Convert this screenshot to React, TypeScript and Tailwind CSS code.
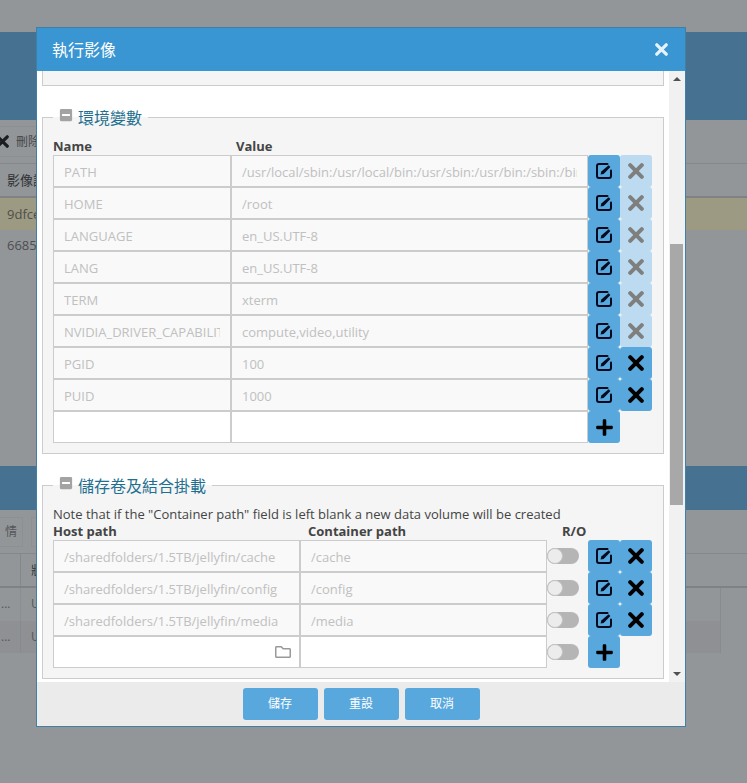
import React from "react";
import { FaPlus, FaMinusSquare, FaRegFolder } from "react-icons/fa";

const FONT = "[font-family:'Open_Sans','Noto_Sans_CJK_TC',sans-serif]";

function XIcon({ size = 16, className }: { size?: number; className?: string }) {
  return (
    <svg width={size} height={size} viewBox="0 0 16 16" className={className} aria-hidden="true">
      <path d="M2.2 2.2 13.8 13.8M13.8 2.2 2.2 13.8" stroke="currentColor" strokeWidth="4" strokeLinecap="round" fill="none" />
    </svg>
  );
}

function EditIcon() {
  return (
    <svg width="18" height="18" viewBox="0 0 18 18" fill="none" aria-hidden="true">
      <path d="M16 8.5V14a2 2 0 0 1-2 2H4a2 2 0 0 1-2-2V4a2 2 0 0 1 2-2h8.5" stroke="#000a1e" strokeWidth="2" strokeLinecap="round" />
      <path d="M13.6 3.2 15.4 5 8.6 11.9 5.6 12.6 6.3 9.6Z" fill="#000a1e" />
    </svg>
  );
}

function IconBtn({ children, disabled }: { children: React.ReactNode; disabled?: boolean }) {
  return (
    <div
      className={
        disabled
          ? "w-8 h-8 rounded-[3px] bg-[#bcdbf0] flex items-center justify-center text-[#7f7f7f]"
          : "w-8 h-8 rounded-[3px] bg-[#58a8de] flex items-center justify-center text-black"
      }
    >
      {children}
    </div>
  );
}

function Field({ value, width, disabled, children }: { value?: string; width: string; disabled?: boolean; children?: React.ReactNode }) {
  return (
    <div className={`${width} h-8 relative shrink-0`}>
      <input
        readOnly
        value={value ?? ""}
        className={
          disabled
            ? "w-full h-full border border-[#ccc] bg-[#f9f9f9] px-[10px] pt-[2px] text-[13px] text-[#c0c0c0] outline-none"
            : "w-full h-full border border-[#ccc] bg-white px-[10px] pt-[2px] text-[13px] text-[#555] outline-none"
        }
      />
      {children}
    </div>
  );
}

function Legend({ title }: { title: string }) {
  return (
    <legend className="px-[6px] flex items-center h-[24px]">
      <FaMinusSquare className="text-[#a3a3a3] mr-[5px] -mt-[4px]" size={14} />
      <span className="text-[16px] leading-[24px] text-[#1f7090] pt-[2px]">{title}</span>
    </legend>
  );
}

const envRows: [string, string, boolean][] = [
  ["PATH", "/usr/local/sbin:/usr/local/bin:/usr/sbin:/usr/bin:/sbin:/bin", true],
  ["HOME", "/root", true],
  ["LANGUAGE", "en_US.UTF-8", true],
  ["LANG", "en_US.UTF-8", true],
  ["TERM", "xterm", true],
  ["NVIDIA_DRIVER_CAPABILITIES", "compute,video,utility", true],
  ["PGID", "100", false],
  ["PUID", "1000", false],
];

const volRows: [string, string][] = [
  ["/sharedfolders/1.5TB/jellyfin/cache", "/cache"],
  ["/sharedfolders/1.5TB/jellyfin/config", "/config"],
  ["/sharedfolders/1.5TB/jellyfin/media", "/media"],
];

function Toggle() {
  return (
    <div className="w-8 h-4 rounded-full bg-[#b5b5b5] shrink-0">
      <div className="w-4 h-4 rounded-full bg-[#ececec] border border-[#c4c4c4]" />
    </div>
  );
}

function Background() {
  return (
    <div className="h-[783px] bg-[#939699] overflow-hidden">
      <div className="h-8" />
      <div className="h-[88px] bg-[#467191]" />
      <div className="h-[44px] border-b border-[#85888a] pt-[6px]">
        <div className="w-[36px] h-[31px] border-y border-[#8d9092] flex items-center">
          <XIcon size={13} className="text-[#1b1d20] -ml-[4px] shrink-0" />
          <span className="ml-[7px] text-[12px] text-[#45484b] whitespace-nowrap">刪除</span>
        </div>
      </div>
      <div className="h-[34px] border-b-2 border-[#7f8284] flex items-center pl-[7px] pt-[2px] text-[13px] text-[#2f3235]">影像識別</div>
      <div className="h-[32px] bg-[#9d9a84] flex items-center pl-[7px] pt-[1px] text-[13px] text-[#4f4f48]">9dfce</div>
      <div className="h-[31px] flex items-center pl-[7px] pt-[1px] text-[13px] text-[#4c4f52]">6685</div>
      <div className="h-[205px]" />
      <div className="h-[44px] bg-[#467191]" />
      <div className="h-[44px] border-b border-[#85888a] pt-[7px] flex gap-[8px]">
        <div className="w-[24px] h-[30px] border border-[#8d9092] flex items-center justify-end pr-[5px] text-[12px] text-[#55585b] -ml-[1px]">情</div>
        <div className="w-[20px] h-[30px] border border-[#8d9092]" />
      </div>
      <div className="h-[34px] border-b-2 border-[#7f8284] flex">
        <div className="w-[21px] border-r border-[#85888a]" />
        <div className="pl-[10px] pt-[8px] text-[12px] text-[#2f3235] whitespace-nowrap">狀態</div>
      </div>
      <div className="w-[721px] h-[33px] border-r border-[#888b8d] text-[#55585b] text-[12px] flex">
        <div className="w-[21px] border-r border-[#8b8e90] pt-[7px] pl-[1px]">...</div>
        <div className="pl-[10px] pt-[7px]">U</div>
      </div>
      <div className="w-[721px] h-[32px] border-r border-[#888b8d] bg-[#8e9093] text-[#55585b] text-[12px] flex">
        <div className="w-[21px] border-r border-[#888b8d] pt-[7px] pl-[1px]">...</div>
        <div className="pl-[10px] pt-[7px]">U</div>
      </div>
    </div>
  );
}

export default function App() {
  return (
    <div className={`relative w-[747px] h-[783px] overflow-hidden ${FONT}`}>
      <Background />
      <div className="absolute left-[36px] top-[27px] w-[650px] h-[700px] border border-[#3f7fa8] bg-white flex flex-col">
        <div className="h-[43px] shrink-0 bg-[#3a96d2] flex items-center justify-between pl-[15px] pr-[17px]">
          <span className="text-[16px] text-white">執行影像</span>
          <XIcon size={13} className="text-[#e6f3fb]" />
        </div>
        <div className="flex-1 flex min-h-0">
          <div className="flex-1 min-w-0 pl-[5px] pr-[5px] overflow-hidden">
            <div className="h-[15px] bg-[#f5f5f5] border border-t-0 border-[#ccc]" />
            <fieldset className="mt-[19px] border border-[#ccc] bg-[#f5f5f5] px-[10px] pb-[10px] pt-[8px] h-[349px]">
              <Legend title="環境變數" />
              <div className="flex text-[13px] leading-[18px] font-bold text-[#444]">
                <div className="w-[183px]">Name</div>
                <div>Value</div>
              </div>
              {envRows.map(([n, v, dis]) => (
                <div key={n} className="flex">
                  <Field value={n} width="w-[178px]" disabled />
                  <Field value={v} width="w-[357px]" disabled />
                  <IconBtn><EditIcon /></IconBtn>
                  <IconBtn disabled={dis}><XIcon /></IconBtn>
                </div>
              ))}
              <div className="flex">
                <Field width="w-[178px]" />
                <Field width="w-[357px]" />
                <IconBtn><FaPlus size={19} /></IconBtn>
              </div>
            </fieldset>
            <fieldset className="mt-[19px] border border-[#ccc] bg-[#f5f5f5] px-[10px] pt-[9px] h-[206px]">
              <Legend title="儲存卷及結合掛載" />
              <div className="text-[13px] leading-[18px] text-[#444] -mt-[1px]">Note that if the "Container path" field is left blank a new data volume will be created</div>
              <div className="flex text-[13px] leading-[18px] font-bold text-[#444] -mt-[1px]">
                <div className="w-[255px]">Host path</div>
                <div className="w-[254px]">Container path</div>
                <div>R/O</div>
              </div>
              {volRows.map(([h, c]) => (
                <div key={h} className="flex items-center">
                  <Field value={h} width="w-[247px]" disabled />
                  <Field value={c} width="w-[247px]" disabled />
                  <div className="w-[41px] shrink-0"><Toggle /></div>
                  <IconBtn><EditIcon /></IconBtn>
                  <IconBtn><XIcon /></IconBtn>
                </div>
              ))}
              <div className="flex items-center">
                <Field width="w-[247px]">
                  <FaRegFolder className="absolute right-[9px] top-[8px] text-[#999]" size={16} />
                </Field>
                <Field width="w-[247px]" />
                <div className="w-[41px] shrink-0"><Toggle /></div>
                <IconBtn><FaPlus size={19} /></IconBtn>
              </div>
            </fieldset>
          </div>
          <div className="w-[16px] shrink-0 bg-[#f1f1f1] flex flex-col items-center justify-between py-[6px] relative">
            <div className="w-0 h-0 border-x-[4px] border-x-transparent border-b-[4px] border-b-[#505050]" />
            <div className="w-0 h-0 border-x-[4px] border-x-transparent border-t-[4px] border-t-[#505050]" />
            <div className="absolute left-[1px] top-[173px] w-[13px] h-[261px] bg-[#a8a8a8]" />
          </div>
        </div>
        <div className="h-[44px] shrink-0 bg-[#ebebeb] flex items-start justify-center gap-[6px] pt-[6px]">
          {["儲存", "重設", "取消"].map((t) => (
            <div key={t} className="w-[75px] h-8 rounded-[3px] bg-[#58a8de] text-white text-[12px] flex items-center justify-center">{t}</div>
          ))}
        </div>
      </div>
    </div>
  );
}
